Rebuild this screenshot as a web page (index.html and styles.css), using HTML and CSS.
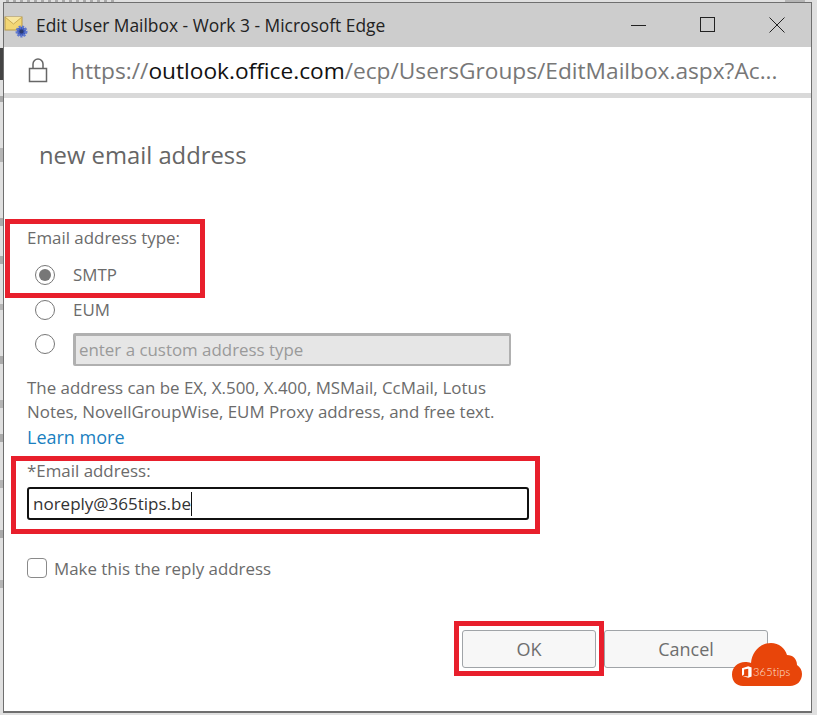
FILE: index.html
```html
<!DOCTYPE html>
<html lang="en">
<head>
<meta charset="utf-8">
<title>Edit User Mailbox</title>
<link rel="stylesheet" href="styles.css">
</head>
<body>
<div class="backdrop" aria-hidden="true">
  <span class="top-scrap"></span>
  <span class="top-right-scrap"></span>
  <span class="left-scraps"></span>
  <span class="dark-block"></span>
</div>
<main class="window">
  <header class="titlebar">
    <svg class="app-icon" width="26" height="26" viewBox="0 0 26 26">
      <rect x="1" y="3" width="17" height="13" fill="#f2d675" stroke="#b89a4a" stroke-width="1"/>
      <path d="M1 3l8.500 7L18 3" fill="#f8e6a0" stroke="#c9aa55" stroke-width="1"/>
      <circle cx="17.500" cy="17.500" r="4.500" fill="#3b56b5" stroke="#5f78d0" stroke-width="3" stroke-dasharray="2 1"/>
      <circle cx="17.500" cy="17.500" r="2" fill="#2b3a70"/>
    </svg>
    <span class="title">Edit User Mailbox - Work 3 - Microsoft Edge</span>
    <div class="controls">
      <svg width="16" height="16" viewBox="0 0 16 16"><path d="M0 8.500h15" stroke="#222" fill="none"/></svg>
      <svg width="16" height="16" viewBox="0 0 16 16"><rect x="0.500" y="0.500" width="14" height="14" stroke="#222" fill="none"/></svg>
      <svg width="16" height="16" viewBox="0 0 16 16"><path d="M.5.500l15 15M15.500.500l-15 15" stroke="#222" fill="none"/></svg>
    </div>
  </header>
  <div class="urlbar">
    <svg class="lock" width="20" height="26" viewBox="0 0 20 26">
      <rect x="1.500" y="11.500" width="17" height="13" fill="none" stroke="#666" stroke-width="1.500"/>
      <path d="M5 11.500V7a5 5 0 0 1 10 0v4.500" fill="none" stroke="#666" stroke-width="1.500"/>
    </svg>
    <span class="url">https://<b class="host">outlook.office.com</b>/ecp/UsersGroups/EditMailbox.aspx?Ac...</span>
  </div>
  <form class="dialog">
    <h1 class="heading">new email address</h1>
    <div class="type-label">Email address type:</div>
    <div class="option option-smtp"><span class="radio radio-on"></span><span>SMTP</span></div>
    <div class="option"><span class="radio"></span><span>EUM</span></div>
    <div class="option option-custom"><span class="radio"></span><span class="custom-input">enter a custom address type</span></div>
    <p class="help">The address can be EX, X.500, X.400, MSMail, CcMail, Lotus<br>Notes, NovellGroupWise, EUM Proxy address, and free text.</p>
    <a class="learn">Learn more</a>
    <div class="email-label">*Email address:</div>
    <div class="email-input"><span>noreply@365tips.be</span><i class="caret"></i></div>
    <div class="check-row"><span class="checkbox"></span><span>Make this the reply address</span></div>
    <div class="buttons">
      <span class="btn btn-ok">OK</span>
      <span class="btn btn-cancel">Cancel</span>
    </div>
  </form>
  <span class="mark mark-type"></span>
  <span class="mark mark-email"></span>
  <span class="mark mark-ok"></span>
  <div class="logo">
    <svg class="cloud" width="70" height="43" viewBox="0 0 70 43">
      <path d="M11 43C4 43 0 38 0 31.500 0 24 6 19 13 19c2 0 4 0 6 1 1-11 9-20 20-20 8 0 14 5 16 12 6 0 10 4 10 10 3 2 5 5 5 9 0 7-5 12-12 12z" fill="#e8450a"/>
    </svg>
    <svg class="office" width="10" height="12" viewBox="0 0 12 14">
      <path d="M0 2.500L7.500 0 11.500 1.500v11L7.500 14 0 11.500l7.500 1V3L2.500 4v6L0 11.500z" fill="#fff"/>
    </svg>
    <span class="logo-text">365tips</span>
  </div>
</main>
</body>
</html>
```
FILE: styles.css
```css
* { box-sizing: border-box; }
html, body { margin: 0; height: 100%; }
body {
  width: 817px;
  height: 715px;
  overflow: hidden;
  background: #e0e0e0;
  padding: 2px 5px 2px 3px;
  position: relative;
  font-family: "Open Sans", "Noto Sans", sans-serif;
  color: #6b6b6b;
}
.backdrop { position: absolute; inset: 0; }
.top-scrap {
  position: absolute;
  left: 6px;
  top: 0;
  width: 112px;
  height: 2px;
  background: repeating-linear-gradient(90deg, #aaa 0 3px, transparent 3px 7px);
}
.top-right-scrap { position: absolute; left: 785px; top: 0; width: 20px; height: 2px; background: #b5b5b5; }
.left-scraps {
  position: absolute;
  left: 0;
  top: 90px;
  width: 3px;
  height: 520px;
  background: linear-gradient(180deg,
    transparent 0 6px, #aaa 6px 12px, transparent 12px 58px, #b5b5b5 58px 72px,
    transparent 72px 128px, #aaa 128px 136px, transparent 136px 166px, #aaa 166px 174px,
    transparent 174px 214px, #b5b5b5 214px 220px, transparent 220px 266px, #aaa 266px 274px,
    transparent 274px 310px, #b5b5b5 310px 318px, transparent 318px 344px, #aaa 344px 352px,
    transparent 352px 390px, #b5b5b5 390px 398px, transparent 398px 440px, #aaa 440px 448px,
    transparent 448px 490px, #b5b5b5 490px 498px, transparent 498px);
}
.dark-block { position: absolute; left: 0; top: 48px; width: 3px; height: 32px; background: #444; }
.window {
  position: relative;
  width: 809px;
  height: 711px;
  background: #fff;
  border: 1px solid #6f6f6f;
  border-bottom-width: 2px;
  display: flex;
  flex-direction: column;
}
.titlebar {
  height: 44px;
  flex: none;
  background: #cdcdcd;
  display: flex;
  align-items: center;
  padding-right: 26px;
}
.app-icon { margin-top: 4px; flex: none; }
.title {
  margin-left: 6px;
  font-size: 17.4px;
  color: #222;
  white-space: nowrap;
}
.controls { margin-left: auto; display: flex; gap: 53px; align-items: center; }
.urlbar {
  height: 46px;
  flex: none;
  background: #fff;
  display: flex;
  align-items: center;
  padding-left: 24px;
  box-shadow: 0 5px 0 #d9d9d9;
  position: relative;
}
.lock { flex: none; }
.url {
  margin-left: 23px;
  font-size: 22.7px;
  color: #777;
  white-space: nowrap;
}
.host { font-weight: 400; color: #111; }
.dialog {
  flex: 1;
  padding: 0 0 0 23px;
  display: flex;
  flex-direction: column;
  font-size: 16.9px;
}
.heading {
  margin: 44px 0 0 12px;
  font-size: 23.8px;
  font-weight: 400;
  line-height: 36px;
  color: #666;
}
.type-label { margin-top: 53px; line-height: 24px; }
.option {
  display: flex;
  align-items: center;
  gap: 18px;
  margin-left: 8px;
  height: 35px;
  line-height: 24px;
}
.option-smtp { margin-top: 7px; }
.radio {
  width: 20px;
  height: 20px;
  border: 1px solid #777;
  border-radius: 50%;
  background: #fff;
  flex: none;
  display: flex;
  align-items: center;
  justify-content: center;
}
.radio-on::after {
  content: "";
  width: 12px;
  height: 12px;
  border-radius: 50%;
  background: #777;
}
.custom-input {
  width: 438px;
  height: 33px;
  margin-top: 10px;
  border: 3px solid #b0b0b0;
  border-right-width: 2px;
  border-bottom-width: 2px;
  border-radius: 2px;
  background: #e6e6e6;
  color: #9a9a9a;
  padding-left: 3px;
  line-height: 27px;
  white-space: nowrap;
}
.option-custom .radio { margin-top: -1px; }
.help { margin: 14px 0 0; line-height: 24px; }
.learn { color: #1a7fc0; font-size: 18px; line-height: 27px; }
.email-label { margin-top: 8px; line-height: 24px; }
.email-input {
  width: 502px;
  height: 33px;
  margin-top: 4px;
  border: 2px solid #111;
  border-radius: 3px;
  font-size: 17px;
  color: #333;
  padding-left: 4px;
  line-height: 29px;
  display: flex;
  align-items: center;
}
.caret { width: 1px; height: 24px; background: #111; flex: none; }
.check-row { display: flex; align-items: center; gap: 7px; margin-top: 37px; height: 22px; }
.checkbox {
  width: 20px;
  height: 20px;
  border: 1px solid #8a8a8a;
  border-radius: 4px;
  flex: none;
}
.buttons { display: flex; margin-top: 51px; margin-left: 435px; gap: 8px; }
.btn {
  height: 38px;
  border: 1px solid #a0a4a8;
  border-radius: 3px;
  background: #f7f7f7;
  display: flex;
  align-items: center;
  justify-content: center;
  font-size: 18px;
  color: #6e6e6e;
}
.btn-ok { width: 134px; }
.btn-cancel { width: 164px; }
.mark { position: absolute; border: 5px solid #e81f2c; pointer-events: none; }
.mark-type { left: 1px; top: 216px; width: 200px; height: 79px; }
.mark-email { left: 7px; top: 453px; width: 529px; height: 78px; }
.mark-ok { left: 450px; top: 618px; width: 150px; height: 55px; }
.logo { position: absolute; left: 728px; top: 640px; width: 70px; height: 43px; }
.cloud { display: block; }
.office { position: absolute; left: 10px; top: 23px; }
.logo-text {
  position: absolute;
  left: 21px;
  top: 21px;
  font-family: "Lato", sans-serif;
  font-weight: 300;
  font-size: 11px;
  letter-spacing: 0.2px;
  line-height: 16px;
  color: #fde3d8;
  white-space: nowrap;
}
```
